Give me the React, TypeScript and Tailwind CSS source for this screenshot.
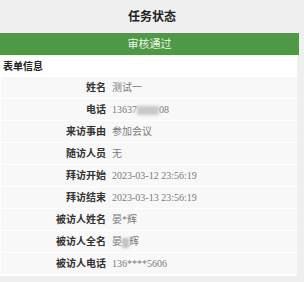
const rows: { label: string; value: React.ReactNode }[] = [
  { label: '姓名', value: '测试一' },
  {
    label: '电话',
    value: (
      <>
        13637
        <span className="inline-block w-[22px] h-[9px] bg-[#c8c8c8] blur-[1.5px] align-middle" />
        08
      </>
    ),
  },
  { label: '来访事由', value: '参加会议' },
  { label: '随访人员', value: '无' },
  { label: '拜访开始', value: '2023-03-12 23:56:19' },
  { label: '拜访结束', value: '2023-03-13 23:56:19' },
  { label: '被访人姓名', value: '晏*辉' },
  {
    label: '被访人全名',
    value: (
      <>
        晏
        <span className="inline-block w-[7px] h-[10px] bg-[#c4c4c4] blur-[1.2px] align-middle" />
        辉
      </>
    ),
  },
  { label: '被访人电话', value: '136****5606' },
]

export default function App() {
  return (
    <div
      className="w-[304px] h-[282px] bg-[#efefef] overflow-hidden"
      style={{ fontFamily: '"Liberation Serif", "Noto Sans CJK SC", serif' }}
    >
      {/* Title */}
      <div className="h-[33px] flex items-center justify-center text-[12px] font-bold text-[#222]">
        任务状态
      </div>

      {/* Status bar */}
      <div className="w-[299px] h-[22px] bg-[#4f9846] flex items-center justify-center text-[11px] text-[#eef5ec]">
        审核通过
      </div>

      {/* Form card */}
      <div className="w-[297px] bg-white pb-[1px]">
        <div className="h-[22px] pl-[3px] flex items-center text-[10px] font-bold text-[#222]">
          表单信息
        </div>
        {rows.map((r) => (
          <div
            key={r.label}
            className="h-[22px] ml-[1px] bg-[#f8f8f8] border-b border-white flex items-center"
          >
            <div className="w-[105px] text-right text-[10px] font-bold text-[#333]">{r.label}</div>
            <div className="ml-[6px] text-[10px] text-[#7a7a7a]">{r.value}</div>
          </div>
        ))}
      </div>
    </div>
  )
}
